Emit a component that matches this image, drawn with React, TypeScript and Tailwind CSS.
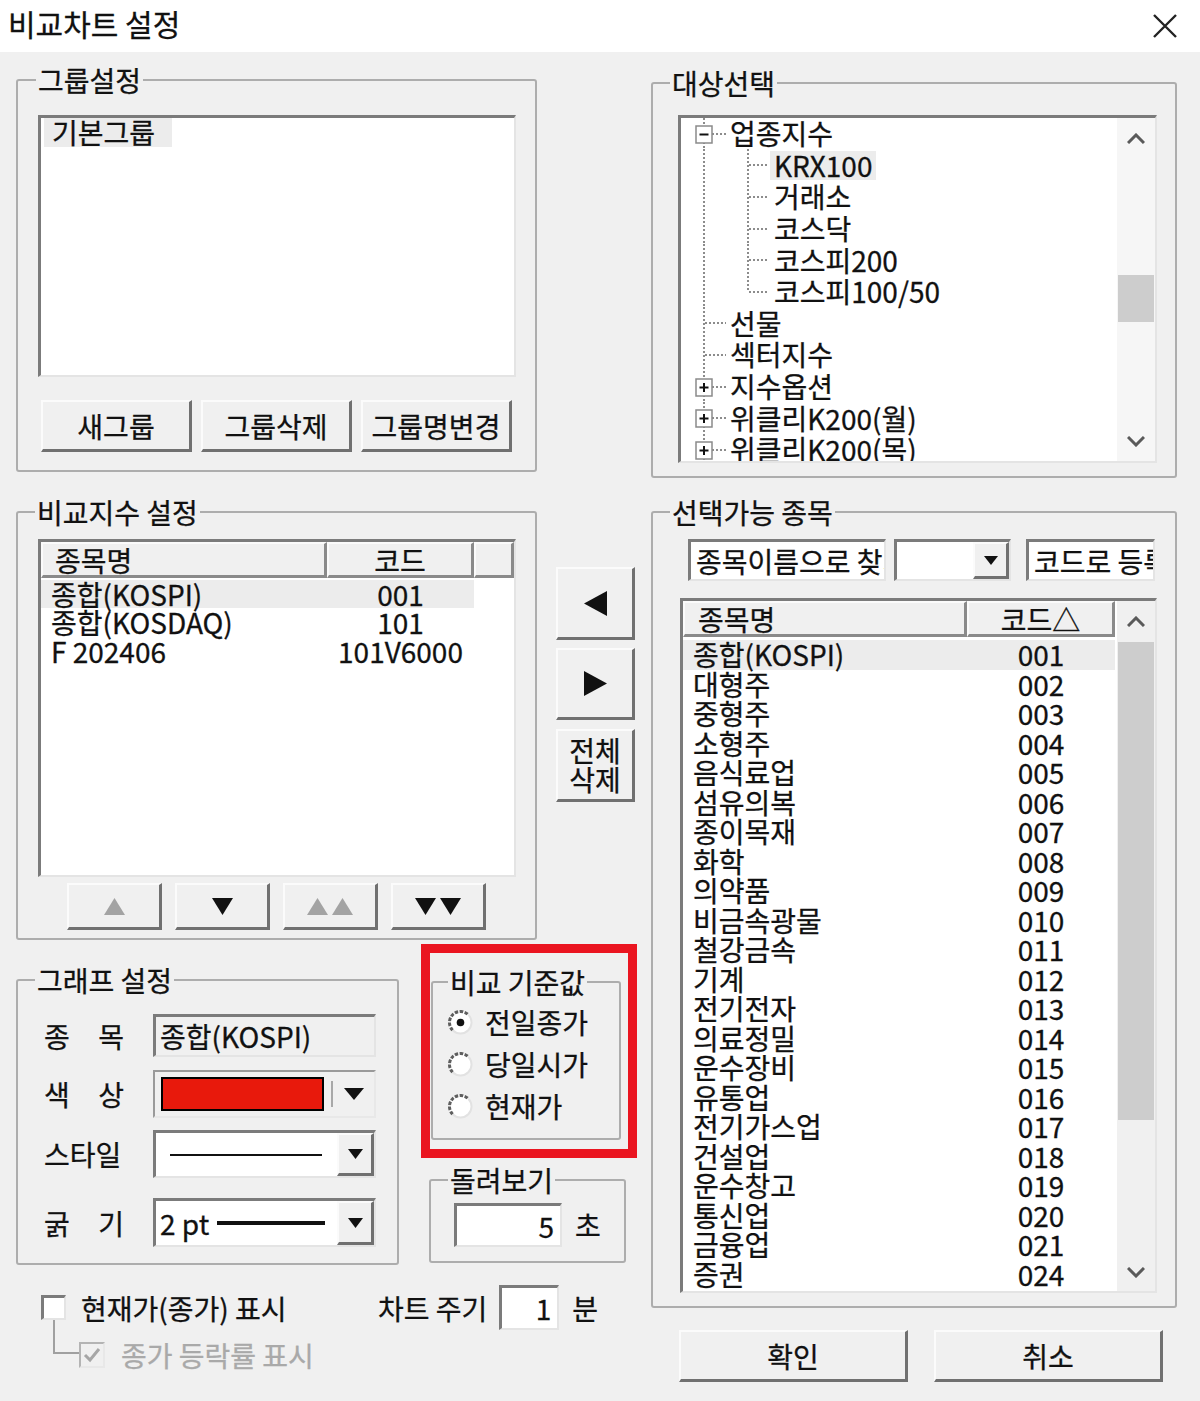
import React from 'react';

const sunken =
  'border-t-[3px] border-l-[3px] border-r-2 border-b-2 border-t-[#7b7b7b] border-l-[#7b7b7b] border-r-[#e4e4e4] border-b-[#e4e4e4]';
const raised =
  'bg-[#f0f0f0] border-t-2 border-l-2 border-r-[3px] border-b-[3px] border-t-[#fbfbfb] border-l-[#fbfbfb] border-r-[#707070] border-b-[#707070]';

function Group({
  title,
  className = '',
  legend = '-ml-[2px]',
  children,
}: {
  title: string;
  className?: string;
  legend?: string;
  children?: React.ReactNode;
}) {
  return (
    <fieldset className={`min-w-0 shrink-0 rounded-[3px] border-2 border-[#adadad] ${className}`}>
      <legend className={`px-[2px] leading-[32px] ${legend}`}>{title}</legend>
      {children}
    </fieldset>
  );
}

function Btn({ className = '', children }: { className?: string; children?: React.ReactNode }) {
  return (
    <button type="button" className={`${raised} shrink-0 flex items-center justify-center ${className}`}>
      {children}
    </button>
  );
}

function Tri({ dir, w, h, color = '#111' }: { dir: 'up' | 'down' | 'left' | 'right'; w: number; h: number; color?: string }) {
  const pts =
    dir === 'up'
      ? `0,${h} ${w / 2},0 ${w},${h}`
      : dir === 'down'
        ? `0,0 ${w},0 ${w / 2},${h}`
        : dir === 'left'
          ? `${w},0 ${w},${h} 0,${h / 2}`
          : `0,0 ${w},${h / 2} 0,${h}`;
  return (
    <svg width={w} height={h} className="shrink-0">
      <polygon points={pts} fill={color} />
    </svg>
  );
}

function Chevron({ up }: { up?: boolean }) {
  return (
    <svg width="18" height="11" viewBox="0 0 18 11">
      <polyline points={up ? '1,10 9,2 17,10' : '1,1 9,9 17,1'} fill="none" stroke="#5a5a5a" strokeWidth="3" />
    </svg>
  );
}

function Radio({ checked }: { checked?: boolean }) {
  return (
    <svg width="25" height="25" viewBox="0 0 25 25" className="shrink-0">
      <circle cx="12.5" cy="12.5" r="11" fill="#fff" />
      <path d="M4.7 20.3 A11 11 0 0 1 20.3 4.7" fill="none" stroke="#5e5e5e" strokeWidth="3" strokeDasharray="3.5 1.5" />
      <path d="M20.3 4.7 A11 11 0 0 1 4.7 20.3" fill="none" stroke="#e2e2e2" strokeWidth="2" />
      {checked && <circle cx="12.5" cy="12.5" r="3.8" fill="#111" />}
    </svg>
  );
}

const dot = { stroke: '#8c8c8c', strokeWidth: 2, strokeDasharray: '2 2' };

function TreeGlyph({ level, box, last }: { level: number; box?: 'plus' | 'minus'; last?: boolean }) {
  if (level === 0) {
    return (
      <svg width="45" height="32" className="shrink-0">
        <line x1="23" y1="0" x2="23" y2="32" {...dot} />
        <line x1={box ? 31 : 24} y1="16" x2="45" y2="16" {...dot} />
        {box && (
          <g>
            <rect x="15" y="8" width="16" height="17" fill="#fff" stroke="#8a8a8a" strokeWidth="1.5" />
            <line x1="18.5" y1="16.5" x2="27.5" y2="16.5" stroke="#111" strokeWidth="2" />
            {box === 'plus' && <line x1="23" y1="12" x2="23" y2="21" stroke="#111" strokeWidth="2" />}
          </g>
        )}
      </svg>
    );
  }
  return (
    <svg width="89" height="32" className="shrink-0">
      <line x1="23" y1="0" x2="23" y2="32" {...dot} />
      <line x1="67" y1="0" x2="67" y2={last ? 16 : 32} {...dot} />
      <line x1="68" y1="16" x2="87" y2="16" {...dot} />
    </svg>
  );
}

const tree: { label: string; level: number; box?: 'plus' | 'minus'; last?: boolean; sel?: boolean }[] = [
  { label: '업종지수', level: 0, box: 'minus' },
  { label: 'KRX100', level: 1, sel: true },
  { label: '거래소', level: 1 },
  { label: '코스닥', level: 1 },
  { label: '코스피200', level: 1 },
  { label: '코스피100/50', level: 1, last: true },
  { label: '선물', level: 0 },
  { label: '섹터지수', level: 0 },
  { label: '지수옵션', level: 0, box: 'plus' },
  { label: '위클리K200(월)', level: 0, box: 'plus' },
  { label: '위클리K200(목)', level: 0, box: 'plus' },
];

const compare = [
  ['종합(KOSPI)', '001'],
  ['종합(KOSDAQ)', '101'],
  ['F 202406', '101V6000'],
];

const stocks = [
  ['종합(KOSPI)', '001'],
  ['대형주', '002'],
  ['중형주', '003'],
  ['소형주', '004'],
  ['음식료업', '005'],
  ['섬유의복', '006'],
  ['종이목재', '007'],
  ['화학', '008'],
  ['의약품', '009'],
  ['비금속광물', '010'],
  ['철강금속', '011'],
  ['기계', '012'],
  ['전기전자', '013'],
  ['의료정밀', '014'],
  ['운수장비', '015'],
  ['유통업', '016'],
  ['전기가스업', '017'],
  ['건설업', '018'],
  ['운수창고', '019'],
  ['통신업', '020'],
  ['금융업', '021'],
  ['증권', '024'],
];

const headCell =
  'h-full flex items-center bg-[#f0f0f0] border-t-2 border-l-2 border-r-[3px] border-b-[3px] border-t-[#fbfbfb] border-l-[#fbfbfb] border-r-[#8a8a8a] border-b-[#8a8a8a]';

function Label({ a, b }: { a: string; b: string }) {
  return (
    <div className="w-[80px] flex justify-between shrink-0">
      <span>{a}</span>
      <span>{b}</span>
    </div>
  );
}

export default function App() {
  return (
    <div className="w-[1200px] h-[1401px] overflow-hidden bg-[#f0f0f0] text-[#111] text-[28px] leading-[32px] [-webkit-text-stroke:0.3px] font-['Noto_Sans_CJK_KR','Noto_Sans',sans-serif]">
      {/* title bar */}
      <div className="h-[52px] bg-white flex items-center justify-between pl-[8px] pr-[22px]">
        <span className="text-[30px] mb-[7px]">비교차트 설정</span>
        <svg width="26" height="26" viewBox="0 0 26 26">
          <path d="M2 2 L24 24 M24 2 L2 24" stroke="#222" strokeWidth="2.4" />
        </svg>
      </div>

      <div className="flex pl-[16px]">
        {/* left column */}
        <div className="w-[621px] shrink-0 pt-[12px] flex flex-col">
          <Group title="그룹설정" className="w-[521px] h-[408px] px-[20px] pt-[19px]">
            <div className={`${sunken} bg-white w-[478px] h-[262px]`}>
              <div className="ml-[3px] w-[128px] h-[29px] leading-[29px] pl-[8px] bg-[#ececec]">기본그룹</div>
            </div>
            <div className="mt-[23px] flex gap-[9px] pl-[3px]">
              <Btn className="w-[151px] h-[52px]">새그룹</Btn>
              <Btn className="w-[151px] h-[52px]">그룹삭제</Btn>
              <Btn className="w-[151px] h-[52px]">그룹명변경</Btn>
            </div>
          </Group>

          {/* compare list + move buttons */}
          <div className="mt-[24px] flex items-start">
            <Group title="비교지수 설정" legend="-ml-[3px]" className="w-[521px] h-[444px] px-[20px] pt-[11px]">
              <div className={`${sunken} bg-white w-[478px] h-[338px] flex flex-col overflow-hidden`}>
                <div className="h-[36px] flex shrink-0">
                  <div className={`${headCell} w-[286px] pl-[12px]`}>종목명</div>
                  <div className={`${headCell} w-[147px] justify-center`}>코드</div>
                  <div className={`${headCell} flex-1`} />
                </div>
                <div className="pt-[2px]">
                  {compare.map(([n, c], i) => (
                    <div key={n} className={`w-[433px] h-[28.3px] leading-[28px] flex ${i === 0 ? 'bg-[#ececec]' : ''}`}>
                      <span className="w-[286px] pl-[10px] shrink-0">{n}</span>
                      <span className="w-[147px] text-center">{c}</span>
                    </div>
                  ))}
                </div>
              </div>
              <div className="mt-[6px] flex justify-center gap-[13px]">
                <Btn className="w-[95px] h-[47px]">
                  <Tri dir="up" w={21} h={17} color="#a3a3a3" />
                </Btn>
                <Btn className="w-[95px] h-[47px]">
                  <Tri dir="down" w={21} h={17} />
                </Btn>
                <Btn className="w-[95px] h-[47px] gap-[4px]">
                  <Tri dir="up" w={21} h={17} color="#a3a3a3" />
                  <Tri dir="up" w={21} h={17} color="#a3a3a3" />
                </Btn>
                <Btn className="w-[95px] h-[47px] gap-[4px]">
                  <Tri dir="down" w={21} h={17} />
                  <Tri dir="down" w={21} h={17} />
                </Btn>
              </div>
            </Group>

            <div className="ml-[19px] w-[79px] pt-[71px] flex flex-col">
              <Btn className="w-[79px] h-[73px]">
                <Tri dir="left" w={23} h={25} />
              </Btn>
              <Btn className="mt-[8px] w-[79px] h-[72px]">
                <Tri dir="right" w={23} h={25} />
              </Btn>
              <Btn className="mt-[9px] w-[79px] h-[73px] flex-col leading-[29px]">
                <span>전체</span>
                <span>삭제</span>
              </Btn>
            </div>
          </div>

          {/* graph settings + base value */}
          <div className="mt-[4px] flex items-start">
            <Group title="그래프 설정" legend="-ml-[9px]" className="mt-[20px] w-[383px] h-[301px] pl-[26px] pr-[18px] pt-[18px]">
              <div className="h-[43px] flex items-center">
                <Label a="종" b="목" />
                <div className={`${sunken} ml-[29px] w-[223px] h-full bg-[#f0f0f0] pl-[4px] flex items-center whitespace-nowrap overflow-hidden`}>종합(KOSPI)</div>
              </div>
              <div className="mt-[13px] h-[48px] flex items-center">
                <Label a="색" b="상" />
                <div className="ml-[29px] w-[223px] h-full bg-[#f0f0f0] border-2 border-t-[#9a9a9a] border-l-[#9a9a9a] border-r-[#e8e8e8] border-b-[#e8e8e8] flex items-center pl-[6px]">
                  <div className="w-[163px] h-[34px] bg-[#e8190c] border-2 border-black shrink-0" />
                  <div className="ml-[7px] w-[2px] h-[26px] bg-[#a8a8a8]" />
                  <div className="ml-[11px]">
                    <Tri dir="down" w={20} h={12} />
                  </div>
                </div>
              </div>
              <div className="mt-[12px] h-[48px] flex items-center">
                <span className="w-[80px] shrink-0 whitespace-nowrap">스타일</span>
                <div className={`${sunken} ml-[29px] w-[223px] h-full bg-white flex`}>
                  <div className="flex-1 flex items-center pl-[14px]">
                    <div className="w-[152px] h-[2px] bg-[#111]" />
                  </div>
                  <div className={`${raised} w-[37px] h-full flex items-center justify-center`}>
                    <Tri dir="down" w={15} h={10} />
                  </div>
                </div>
              </div>
              <div className="mt-[20px] h-[49px] flex items-center">
                <Label a="굵" b="기" />
                <div className={`${sunken} ml-[29px] w-[223px] h-full bg-white flex`}>
                  <div className="flex-1 flex items-center pl-[4px]">
                    <span className="whitespace-nowrap">2 pt</span>
                    <div className="ml-[8px] w-[108px] h-[4px] bg-[#111]" />
                  </div>
                  <div className={`${raised} w-[37px] h-full flex items-center justify-center`}>
                    <Tri dir="down" w={15} h={10} />
                  </div>
                </div>
              </div>
            </Group>

            <div className="ml-[22px] w-[216px] shrink-0 flex flex-col">
              <div className="h-[214px] border-[9px] border-[#ea1520] pt-[13px] pl-[1px]">
                <Group title="비교 기준값" legend="" className="w-[190px] h-[174px] pl-[15px] pt-[3px]">
                  <div className="h-[42px] flex items-center gap-[12px]">
                    <Radio checked />
                    <span>전일종가</span>
                  </div>
                  <div className="h-[42px] flex items-center gap-[12px]">
                    <Radio />
                    <span>당일시가</span>
                  </div>
                  <div className="h-[42px] flex items-center gap-[12px]">
                    <Radio />
                    <span>현재가</span>
                  </div>
                </Group>
              </div>
              <Group title="돌려보기" legend="-ml-[6px]" className="mt-[6px] ml-[8px] w-[197px] h-[99px] pl-[23px] pt-[7px]">
                <div className="flex items-center">
                  <div className={`${sunken} w-[108px] h-[44px] bg-white flex items-center justify-end pr-[6px]`}>5</div>
                  <span className="ml-[13px]">초</span>
                </div>
              </Group>
            </div>
          </div>

          {/* check options */}
          <div className="mt-[20px] h-[45px] flex items-center">
            <div className="w-[362px] flex items-center shrink-0">
              <div className={`${sunken} ml-[25px] w-[25px] h-[25px] bg-white`} />
              <span className="ml-[15px] whitespace-nowrap">현재가(종가) 표시</span>
            </div>
            <span className="whitespace-nowrap">차트 주기</span>
            <div className={`${sunken} ml-[12px] w-[60px] h-[45px] bg-white flex items-center justify-end pr-[6px]`}>1</div>
            <span className="ml-[13px]">분</span>
          </div>
          <div className="-mt-[10px] pl-[37px] flex items-start">
            <div className="w-[26px] h-[34px] border-l-2 border-b-2 border-[#a0a0a0] shrink-0" />
            <div className="mt-[22px] w-[26px] h-[26px] bg-[#f0f0f0] border-2 border-t-[#b4b4b4] border-l-[#b4b4b4] border-r-[#e8e8e8] border-b-[#e8e8e8] flex items-center justify-center shrink-0">
              <svg width="18" height="16" viewBox="0 0 18 16">
                <polyline points="2,8 7,13 16,2" fill="none" stroke="#a6a6a6" strokeWidth="3" />
              </svg>
            </div>
            <span className="ml-[16px] mt-[19px] text-[#a9a9a9] whitespace-nowrap">종가 등락률 표시</span>
          </div>
        </div>

        {/* right column */}
        <div className="ml-[14px] w-[526px] shrink-0 pt-[15px] flex flex-col">
          <Group title="대상선택" legend="-ml-[8px]" className="w-[526px] h-[411px] pl-[25px] pr-[18px] pt-[16px]">
            <div className={`${sunken} bg-white w-[479px] h-[348px] flex overflow-hidden`}>
              <div className="flex-1 flex flex-col overflow-hidden">
                {tree.map((t) => (
                  <div key={t.label} className="h-[31.6px] shrink-0 flex items-center">
                    <TreeGlyph level={t.level} box={t.box} last={t.last} />
                    <span className={`px-[4px] leading-[29px] whitespace-nowrap ${t.sel ? 'bg-[#ececec]' : ''}`}>{t.label}</span>
                  </div>
                ))}
              </div>
              <div className="w-[38px] shrink-0 bg-[#f6f6f6] flex flex-col">
                <div className="h-[40px] flex items-center justify-center">
                  <Chevron up />
                </div>
                <div className="flex-1">
                  <div className="mt-[117px] h-[47px] mx-[1px] bg-[#cdcdcd]" />
                </div>
                <div className="h-[40px] flex items-center justify-center">
                  <Chevron />
                </div>
              </div>
            </div>
          </Group>

          <Group title="선택가능 종목" legend="-ml-[10px]" className="mt-[18px] w-[526px] h-[812px] pl-[27px] pr-[18px] pt-[11px]">
            <div className="h-[42px] flex pl-[8px]">
              <div className={`${sunken} w-[198px] h-full bg-white pl-[5px] flex items-center overflow-hidden whitespace-nowrap`}>종목이름으로 찾기</div>
              <div className={`${sunken} ml-[8px] w-[117px] h-full bg-white flex justify-end`}>
                <div className={`${raised} w-[36px] h-full flex items-center justify-center`}>
                  <Tri dir="down" w={14} h={9} />
                </div>
              </div>
              <div className={`${sunken} ml-[15px] w-[129px] h-full bg-white pl-[5px] flex items-center overflow-hidden whitespace-nowrap`}>코드로 등록</div>
            </div>

            <div className={`${sunken} mt-[17px] w-[477px] h-[695px] bg-white flex overflow-hidden`}>
              <div className="flex-1 flex flex-col overflow-hidden">
                <div className="h-[36px] flex shrink-0">
                  <div className={`${headCell} w-[284px] pl-[13px]`}>종목명</div>
                  <div className={`${headCell} w-[148px] justify-center`}>코드△</div>
                </div>
                <div className="pt-[3px]">
                  {stocks.map(([n, c], i) => (
                    <div key={c} className={`w-[432px] h-[29.5px] leading-[29px] flex ${i === 0 ? 'bg-[#ececec]' : ''}`}>
                      <span className="w-[284px] pl-[10px] shrink-0">{n}</span>
                      <span className="w-[148px] text-center">{c}</span>
                    </div>
                  ))}
                </div>
              </div>
              <div className="w-[38px] shrink-0 bg-[#f0f0f0] flex flex-col">
                <div className="h-[41px] flex items-center justify-center">
                  <Chevron up />
                </div>
                <div className="flex-1">
                  <div className="h-[478px] mx-[1px] bg-[#cdcdcd]" />
                </div>
                <div className="h-[38px] flex items-center justify-center">
                  <Chevron />
                </div>
              </div>
            </div>
          </Group>

          <div className="mt-[22px] pl-[28px] flex gap-[26px]">
            <Btn className="w-[229px] h-[52px]">확인</Btn>
            <Btn className="w-[229px] h-[52px]">취소</Btn>
          </div>
        </div>
      </div>
    </div>
  );
}
